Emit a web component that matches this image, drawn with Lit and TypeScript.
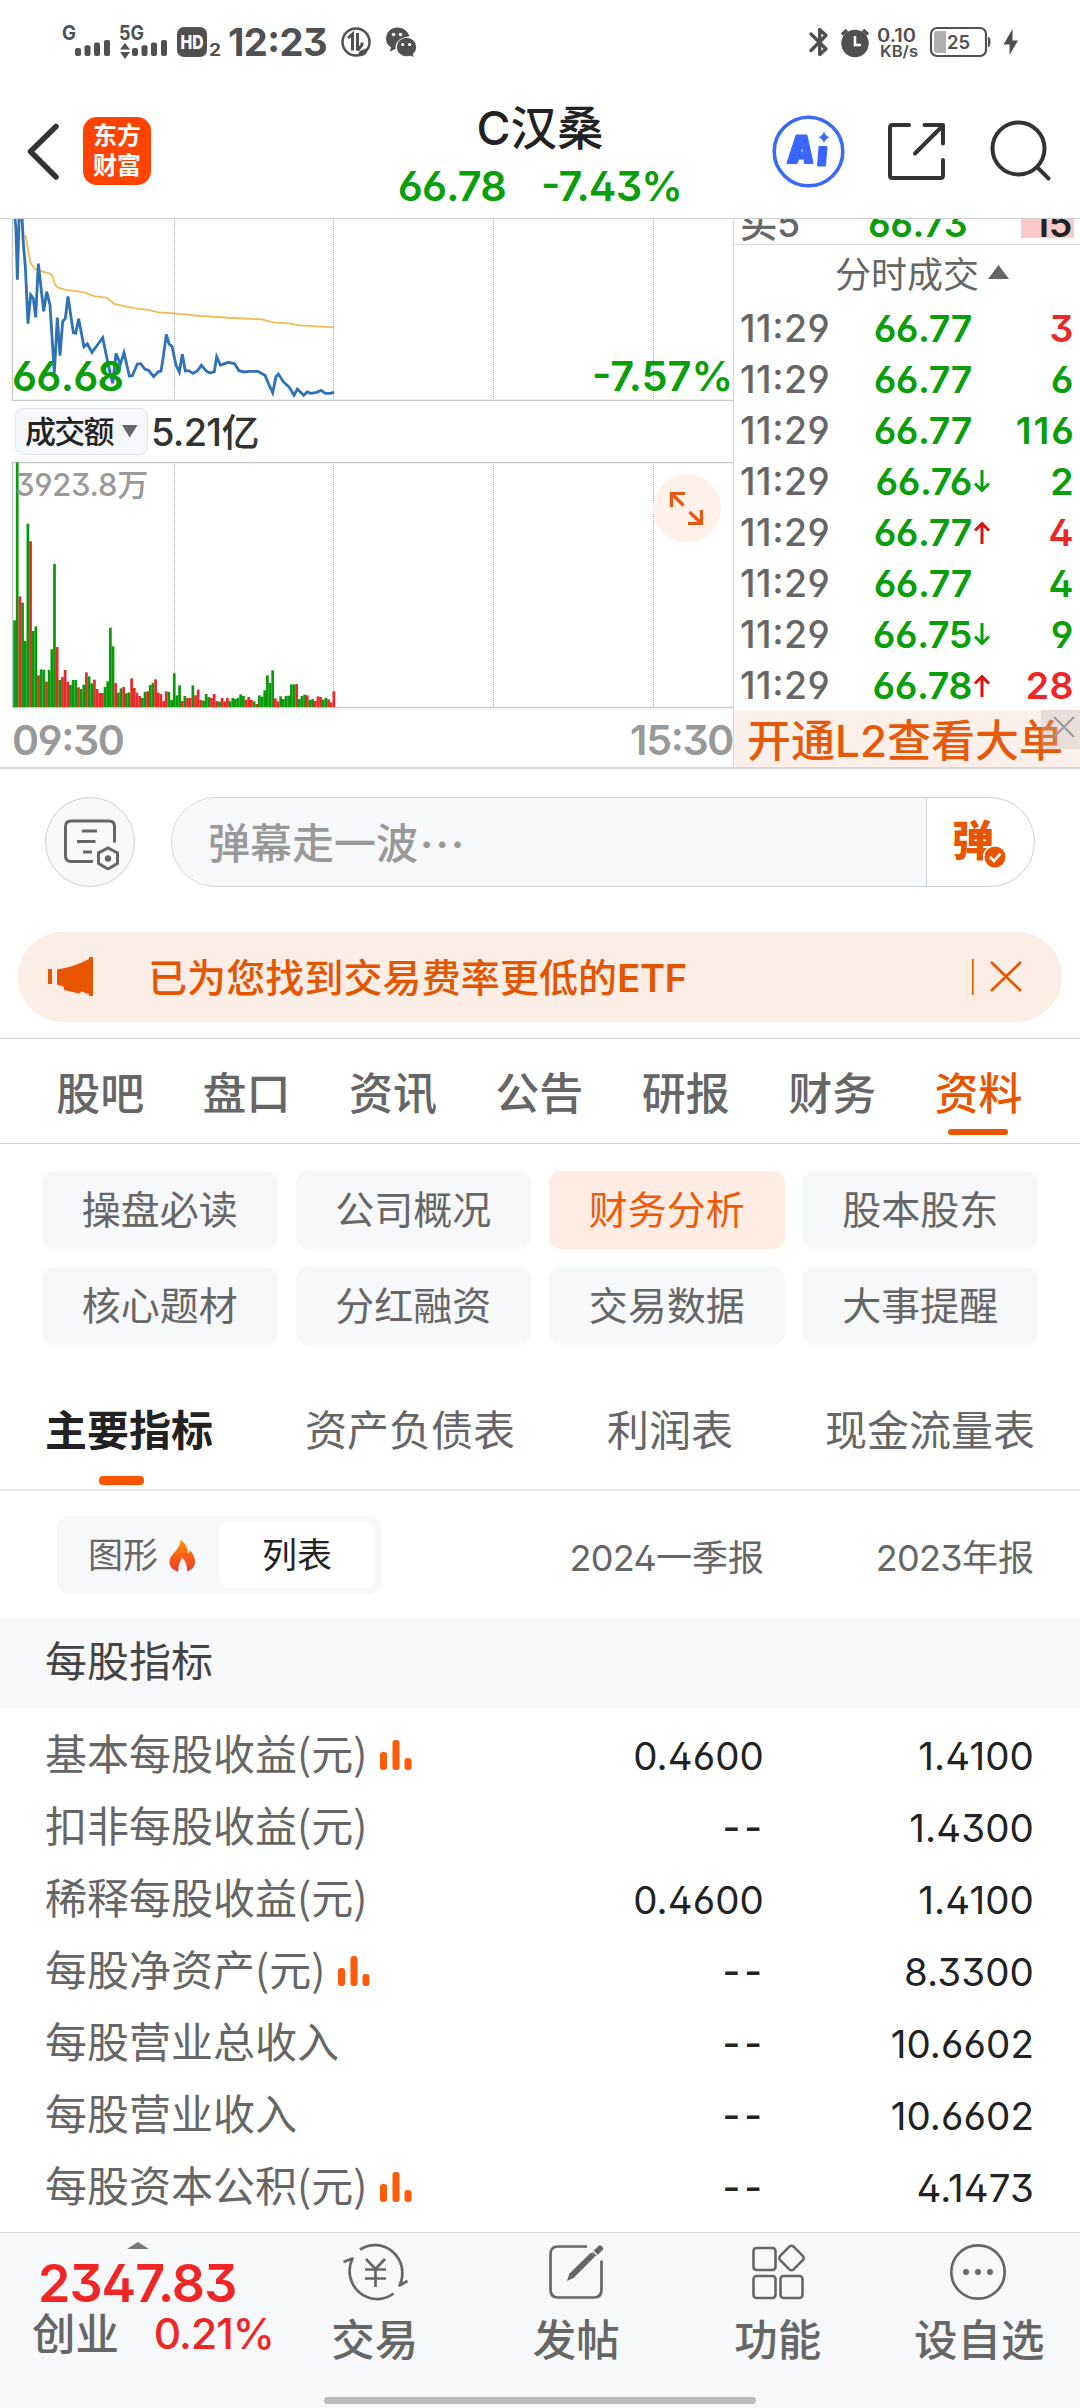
import { LitElement, html, svg, css, nothing } from "lit";
import { customElement, property } from "lit/decorators.js";
import { classMap } from "lit/directives/class-map.js";

type Trade = { price: string; qty: string; up: boolean; arrow?: "up" | "down" };
type Metric = { label: string; chart?: boolean; q1: string; year: string };

const TRADES: Trade[] = [
  { price: "66.77", qty: "3", up: true },
  { price: "66.77", qty: "6", up: false },
  { price: "66.77", qty: "116", up: false },
  { price: "66.76", qty: "2", up: false, arrow: "down" },
  { price: "66.77", qty: "4", up: true, arrow: "up" },
  { price: "66.77", qty: "4", up: false },
  { price: "66.75", qty: "9", up: false, arrow: "down" },
  { price: "66.78", qty: "28", up: true, arrow: "up" },
];

const METRICS: Metric[] = [
  { label: "基本每股收益(元)", chart: true, q1: "0.4600", year: "1.4100" },
  { label: "扣非每股收益(元)", q1: "--", year: "1.4300" },
  { label: "稀释每股收益(元)", q1: "0.4600", year: "1.4100" },
  { label: "每股净资产(元)", chart: true, q1: "--", year: "8.3300" },
  { label: "每股营业总收入", q1: "--", year: "10.6602" },
  { label: "每股营业收入", q1: "--", year: "10.6602" },
  { label: "每股资本公积(元)", chart: true, q1: "--", year: "4.1473" },
];

// Per-minute turnover: height in thirds of a pixel, g = falling, r = rising.
const VOLUME =
  "260g 734g 332r 313g 198g 550g 497r 228g 242g 95r 113g 111g 76r 111g 173g 429g 180r 81g 90r 111r 76r 66g 81g 81g 59r 54g 67g 104r 92g 71g 82r 54r 42r 42r 60g 77g 238g 182g 72r 43g 56g 60r 41g 44g 86r 57r 43r 33r 27g 45g 47r 66g 72g 83r 43r 39r 18r 47r 45g 21g 101g 35g 65g 18r 33g 27r 27r 65g 35r 52r 21r 19g 39g 30g 27r 39r 18r 16g 27r 17r 27r 17g 27g 24g 28g 38g 33g 22r 30r 21r 17g 9r 35g 31g 50g 95g 72g 110g 26r 17r 32g 24g 33g 34g 68g 68g 69r 24g 33g 37g 35r 21g 24g 18r 32r 30r 22g 27g 23r 14r 47r"
    .split(" ")
    .map((v) => ({ h: parseInt(v, 10) / 3, up: v.endsWith("r") }));

const PRICE_LINE =
  "44,10 48,60 52,209 58,0 66,20 70,100 76,170 84,341 92,255 100,265 107,322 115,161 131,304 140,245 150,285 163,490 172,323 180,437 188,335 196,325 204,259 220,368 227,370 236,326 252,410 262,402 276,427 290,408 308,383 326,470 338,520 348,430 361,463 372,428 388,498 397,497 412,462 422,461 435,478 445,480 461,500 475,485 483,483 490,440 499,373 507,402 516,409 528,465 538,486 547,433 556,483 566,482 579,490 592,483 604,466 620,484 630,489 643,485 650,440 661,465 668,463 685,457 704,461 717,482 733,486 750,484 773,484 795,496 806,522 818,548 828,500 835,492 850,515 868,532 882,556 892,537 911,556 922,546 932,550 950,547 963,541 976,550 990,550 1002,547";
const AVG_LINE =
  "66,77 77,79 84,120 92,160 107,178 120,183 148,190 157,197 165,223 172,232 196,239 252,247 285,259 320,263 343,282 405,295 440,299 475,307 523,310 600,318 700,324 785,328 820,337 865,340 900,346 1002,352";

const GRID_X = [174.5, 333.5, 493.5, 653.5];

const base = css`
  :host {
    display: block;
    font-family: Inter, "Noto Sans CJK SC", sans-serif;
    font-feature-settings: "ss01", "calt";
    color: #666;
  }
  * {
    box-sizing: border-box;
  }
  svg {
    display: block;
    flex: none;
  }
`;

@customElement("status-bar")
class StatusBar extends LitElement {
  static styles = [
    base,
    css`
      :host { height: 84px; }
      .bar { display: flex; height: 84px; justify-content: space-between; }
      .clock { font-weight: 700; font-size: 38.5px; fill: #505050; letter-spacing: -0.6px; }
      .tiny { font-weight: 700; fill: #505050; }
      .med { font-weight: 600; fill: #505050; }
      .hd { font-weight: 800; fill: #fff; }
    `,
  ];
  render() {
    return html`<div class="bar">
      <svg width="440" height="84" fill="#505050">
        <text class="tiny" x="62" y="39.5" font-size="20" textLength="14" lengthAdjust="spacingAndGlyphs">G</text>
        ${[75, 84.5, 94, 104].map((x, i) => svg`<rect x=${x} y=${48 - i * 2.7} width="6" height=${8 + i * 2.7} rx="2" />`)}
        <text class="tiny" x="119" y="40" font-size="20" textLength="25" lengthAdjust="spacingAndGlyphs">5G</text>
        <path d="M120 49.500L125 43L130 49.500ZM120 52L125 59L130 52Z" />
        ${[132, 141.500, 151, 161].map((x, i) => svg`<rect x=${x} y=${48 - i * 2.7} width="6" height=${8 + i * 2.7} rx="2" />`)}
        <rect x="177" y="27" width="30" height="30" rx="7" />
        <text class="hd" x="180.500" y="49" font-size="19" textLength="23" lengthAdjust="spacingAndGlyphs">HD</text>
        <text class="tiny" x="209" y="56" font-size="17" textLength="12" lengthAdjust="spacingAndGlyphs">2</text>
        <text class="clock" x="228" y="56" textLength="99" lengthAdjust="spacingAndGlyphs">12:23</text>
        <circle cx="356" cy="42" r="13.500" fill="none" stroke="#505050" stroke-width="2.500" />
        <path d="M348 38L352.500 34V50.500M357.500 33V50.500M362 42.500V45L357.500 50.500" fill="none" stroke="#505050" stroke-width="3" />
        <path d="M358 56C359 48 364 51 368 47C368 54 364 57 358 56Z" />
        <path d="M397 27.500C403.500 27.500 408.500 31.500 409.300 36.500C401.500 36.500 395.500 41.500 395.500 47.500C395.500 48 395.500 48.500 395.600 49L390 51.500L391 47.300C388 45.300 386 42.500 386 39C386 32.600 391 27.500 397 27.500Z" />
        <ellipse cx="406.500" cy="47" rx="9.700" ry="9.200" />
        <path d="M409 55L413.500 57L412.500 52Z" />
        <circle cx="393.500" cy="34.500" r="1.800" fill="#fff" /><circle cx="400.500" cy="34.500" r="1.800" fill="#fff" />
        <circle cx="402.700" cy="44.500" r="1.600" fill="#fff" /><circle cx="409.600" cy="44.500" r="1.600" fill="#fff" />
      </svg>
      <svg width="280" height="84" viewBox="800 0 280 84" fill="#505050">
        <path d="M811 34L826 49L819.700 54.500V29.500L826 35.500L811 50.500" fill="none" stroke="#505050" stroke-width="3.400" stroke-linejoin="round" stroke-linecap="round" />
        <circle cx="855" cy="43.500" r="13.700" />
        <path d="M842 34.500L847 30M868 34.500L863 30" stroke="#505050" stroke-width="3.500" />
        <path d="M855 36V45H861" fill="none" stroke="#fff" stroke-width="2.500" />
        <text class="med" x="877" y="41.500" font-size="18" textLength="39" lengthAdjust="spacingAndGlyphs">0.10</text>
        <text class="med" x="880" y="57" font-size="15.500" textLength="38" lengthAdjust="spacingAndGlyphs">KB/s</text>
        <rect x="931" y="28" width="55" height="28" rx="6" fill="none" stroke="#505050" stroke-width="2.200" />
        <path d="M937 31H946V53H937Q934 53 934 50V34Q934 31 937 31Z" fill="#b0b0b0" />
        <path d="M988 37Q990.500 37 990.500 42T988 47Z" />
        <text class="med" x="947" y="49" font-size="19" textLength="23" lengthAdjust="spacingAndGlyphs">25</text>
        <path d="M1012.500 29L1003.500 44.500H1009.500V55L1018 40.500H1012.500Z" />
      </svg>
    </div>`;
  }
}

@customElement("stock-header")
class StockHeader extends LitElement {
  static styles = [
    base,
    css`
      .head { height: 134px; display: grid; grid-template-columns: 1fr auto 1fr; }
      .left { display: flex; padding: 33px 0 0 26px; gap: 23px; }
      .logo { width: 68px; height: 68px; border-radius: 14px; background: #ff4400; color: #fff; font-weight: 700; font-size: 24px; line-height: 30px; text-align: center; padding-top: 4px; }
      .mid { display: flex; flex-direction: column; align-items: center; }
      .name { font-size: 46.500px; line-height: 60px; margin-top: 14px; color: #222; font-weight: 500; }
      .quote { display: flex; gap: 35px; font-size: 41.500px; font-weight: 600; line-height: 50px; margin-top: 3px; color: #0a9e0a; letter-spacing: -0.800px; white-space: nowrap; }
      .right { display: flex; justify-content: flex-end; padding-top: 31px; }
    `,
  ];
  render() {
    return html`<div class="head">
      <div class="left">
        <svg width="34" height="68" viewBox="26 117 34 68"><path d="M56 126.500L30.500 151.500L56 177" fill="none" stroke="#333" stroke-width="5.500" stroke-linecap="round" stroke-linejoin="round" /></svg>
        <div class="logo">东方<br />财富</div>
      </div>
      <div class="mid">
        <div class="name">C汉桑</div>
        <div class="quote"><span>66.78</span><span>-7.43%</span></div>
      </div>
      <div class="right">
        <svg width="310" height="74" viewBox="770 115 310 74" fill="none">
          <circle cx="808.500" cy="151.500" r="34.300" stroke="#3d6af2" stroke-width="3.600" />
          <g stroke="#3a66ff" stroke-linejoin="round" fill="#3a66ff">
            <path fill-rule="evenodd" stroke-width="2" d="M796.500 135.500H806.500L812.500 163H805L804.300 158.500H798.500L796.500 163H787.500ZM799.500 152.500H803.800L803 144Z" />
            <path stroke-width="2" d="M819.500 147H826.500L825 165.500H818Z" />
            <path stroke="none" d="M824 131.500Q825.500 136 829.500 137.300Q825.500 138.500 824 143Q822.500 138.500 818.500 137.300Q822.500 136 824 131.500Z" />
          </g>
          <g stroke="#333" stroke-width="4" stroke-linecap="round" stroke-linejoin="round">
            <path d="M909 125H892.500Q890 125 890 127.500V175.500Q890 178 892.500 178H940.500Q943 178 943 175.500V160M924.500 125H943V143.500M942 126.500L915 153.500" />
            <circle cx="1018.500" cy="148.500" r="26" />
            <path d="M1038 168L1048.500 178.500" />
          </g>
        </svg>
      </div>
    </div>`;
  }
}

@customElement("trend-chart")
class TrendChart extends LitElement {
  static styles = [
    base,
    css`
      :host { width: 733px; }
      .pane { position: relative; }
      .over { position: absolute; line-height: 50px; white-space: nowrap; font-weight: 600; }
      .low { left: 12px; top: 133px; font-size: 41.500px; color: #0a9e0a; letter-spacing: -0.700px; }
      .pct { right: 0; top: 133px; font-size: 41.500px; color: #0a9e0a; letter-spacing: -0.100px; }
      .max { left: 15px; top: -2px; font-size: 31px; font-weight: 500; color: #999; letter-spacing: -0.300px; }
      .kind { display: flex; align-items: center; height: 61px; padding-left: 15px; gap: 3px; font-weight: 500; color: #333; }
      .pick { display: flex; align-items: center; width: 133px; height: 47px; border-radius: 8px; background: #f6f7fa; border: 1.500px solid #e2e5ea; padding-left: 9px; gap: 9px; font-size: 31px; line-height: 44px; color: #222; letter-spacing: -1.700px; }
      .sum { font-size: 38px; line-height: 46px; letter-spacing: -0.700px; }
      .times { display: flex; justify-content: space-between; padding: 6px 0 0 12px; height: 58px; font-size: 41px; line-height: 50px; font-weight: 600; color: #999; letter-spacing: -1.300px; }
      .expand { position: absolute; left: 652px; top: 11px; }
    `,
  ];
  render() {
    const grid = (h: number) => GRID_X.map((x) => svg`<path d=${`M${x} 2V${h}`} stroke="#aaa" stroke-width="1" stroke-dasharray="1 1" />`);
    return html`
      <div class="pane">
        <svg width="733" height="183" viewBox="0 218 733 183">
          <g transform="translate(0 218)">${grid(182)}</g>
          <path d="M12.500 218V400.500H733" fill="none" stroke="#c6c8ca" stroke-width="1.400" />
          <g transform="translate(0 210) scale(.33333)" fill="none" stroke-linejoin="round">
            <polyline points=${AVG_LINE} stroke="#f0bd55" stroke-width="5.500" />
            <polyline points=${PRICE_LINE} stroke="#2f72b8" stroke-width="8.500" stroke-linejoin="miter" />
          </g>
          <path d="M0 218.500H733" stroke="#cfd2d5" stroke-width="1.200" />
        </svg>
        <span class="over low">66.68</span><span class="over pct">-7.57%</span>
      </div>
      <div class="kind">
        <span class="pick">成交额<svg width="16" height="13"><path d="M0 0H15.500L7.700 12.500Z" fill="#666" /></svg></span>
        <span class="sum">5.21亿</span>
      </div>
      <div class="pane">
        <svg width="733" height="247" viewBox="0 463 733 247">
          <g transform="translate(0 463)">${grid(245)}</g>
          <path d="M733 463.500H12.500V708.500H733" fill="none" stroke="#c6c8ca" stroke-width="1.400" />
          ${VOLUME.map((b, i) => svg`<rect x=${13.2 + i * 2.661} y=${708 - b.h} width="2.750" height=${b.h} fill=${b.up ? "#e82a2a" : "#0a9b0a"} />`)}
        </svg>
        <span class="over max">3923.8万</span>
        <svg class="expand" width="70" height="70" viewBox="652 474 70 70">
          <circle cx="687" cy="509.500" r="34" fill="#fff0e9" />
          <path d="M671.500 508V494.500H685M672.500 495.500L683.500 506.500M701.500 511V524.500H688M700.500 523.500L689.500 513" fill="none" stroke="#e25a10" stroke-width="3.200" />
        </svg>
      </div>
      <div class="times"><span>09:30</span><span>15:30</span></div>
    `;
  }
}

@customElement("trade-list")
class TradeList extends LitElement {
  static styles = [
    base,
    css`
      :host { border-left: 1.500px solid #d4d7da; font-weight: 600; font-size: 37.500px; width: 347px; }
      .row { display: grid; grid-template-columns: 135px 97px 1fr; height: 51px; line-height: 53px; padding: 0 6px 0 6px; letter-spacing: -0.400px; white-space: nowrap; }
      .time { letter-spacing: 0.500px; font-weight: 500; }
      .price { display: flex; justify-content: flex-end; color: #0a9e0a; position: relative; }
      .qty { text-align: right; letter-spacing: 0.500px; }
      .qty.long { letter-spacing: 2px; margin-right: -2px; }
      .rise { color: #ee2626; }
      .fall { color: #0a9e0a; }
      .arrow { position: absolute; left: 98px; top: 15px; }
      .book { height: 27px; overflow: hidden; border-top: 1px solid #cfd2d5; border-bottom: 1.500px solid #d8dadc; display: grid; grid-template-columns: 128px 1fr 53px; padding: 0 6px; letter-spacing: -0.400px; }
      .book > span { margin-top: -19px; line-height: 48px; height: 48px; }
      .book .side { font-weight: 500; }
      .book .lot { margin-top: 0; height: 19px; background: #fcc9c9; color: #222; text-align: right; line-height: 10px; padding-right: 2px; }
      .title { display: flex; align-items: center; gap: 9px; height: 57px; padding: 0 0 3px 101px; font-size: 36px; font-weight: 400; }
      .l2 { position: relative; height: 57px; line-height: 63px; background: #fdf0ea; color: #e45a0a; font-size: 44px; font-weight: 500; padding-left: 13px; white-space: nowrap; }
      .close { position: absolute; right: 0; top: 0; }
    `,
  ];
  render() {
    return html`
      <div class="book"><span class="side">买5</span><span class="fall">66.73</span><span class="lot">15</span></div>
      <div class="title">分时成交<svg width="21" height="14"><path d="M10.500 0L21 14H0Z" fill="#666" /></svg></div>
      ${TRADES.map(
        (t) => html`<div class="row">
          <span class="time">11:29</span>
          <span class="price">${t.price}${t.arrow
              ? html`<svg class="arrow" width="18" height="24" fill="none" stroke-width="3" stroke=${t.arrow === "up" ? "#dd1010" : "#0a9e0a"}>
                  <path d=${t.arrow === "up" ? "M9 23V3M2 9.500L9 2.500L16 9.500" : "M9 0V20M2 13.500L9 20.500L16 13.500"} />
                </svg>`
              : nothing}</span>
          <span class=${classMap({ qty: true, long: t.qty.length > 2, rise: t.up, fall: !t.up })}>${t.qty}</span>
        </div>`
      )}
      <div class="l2">开通L2查看大单
        <svg class="close" width="39" height="39"><rect width="39" height="39" fill="#bbb" opacity=".3" /><path d="M13 7L33 27M33 7L13 27" stroke="#999" stroke-width="2" /></svg>
      </div>
    `;
  }
}

@customElement("metric-row")
class MetricRow extends LitElement {
  @property({ attribute: false }) metric!: Metric;
  static styles = [
    base,
    css`
      .row { display: grid; grid-template-columns: 450px 269px 270px; height: 72px; padding: 0 46px 0 45px; font-size: 42px; line-height: 66px; white-space: nowrap; }
      .label { display: flex; gap: 13px; font-family: "Noto Sans CJK SC", sans-serif; }
      .label svg { margin-top: 20px; }
      .num { text-align: right; color: #222; font-size: 38.500px; letter-spacing: 0.100px; line-height: 74px; }
      .none { letter-spacing: 4px; font-weight: 500; line-height: 72px; margin-right: -2px; }
    `,
  ];
  render() {
    const m = this.metric;
    const num = (v: string) => html`<span class=${classMap({ num: true, none: v === "--" })}>${v}</span>`;
    return html`<div class="row">
      <span class="label">${m.label}${m.chart
          ? html`<svg width="32" height="32" fill="#ff5a0a"><rect x="0" y="13" width="7" height="18" rx="3" /><rect x="12.500" y="1" width="7" height="30" rx="3" /><rect x="24.500" y="19" width="7" height="12" rx="3" /></svg>`
          : nothing}</span>
      ${num(m.q1)}${num(m.year)}
    </div>`;
  }
}

@customElement("bottom-bar")
class BottomBar extends LitElement {
  static styles = [
    base,
    css`
      .bar { height: 176px; background: #f7f8fa; border-top: 1.500px solid #d0d3d6; display: grid; grid-template-columns: 274px repeat(4, 201.500px); font-weight: 500; position: relative; }
      .index { color: #ee2626; padding: 9px 0 0 33px; font-weight: 600; }
      .caret { margin-left: 94px; }
      .value { font-size: 52px; line-height: 52px; margin-top: 9px; padding-left: 5px; letter-spacing: -1px; }
      .change { display: flex; justify-content: space-between; font-size: 42.500px; line-height: 44px; margin-top: 2px; letter-spacing: -1px; white-space: nowrap; }
      .pct { font-weight: 500; }
      .name { color: #666; font-size: 43.500px; letter-spacing: 0; font-weight: 500; margin-left: -1px; }
      .item { display: flex; flex-direction: column; align-items: center; padding-top: 8px; font-size: 43.500px; line-height: 60px; gap: 7px; white-space: nowrap; }
      .home { position: absolute; left: 324px; top: 164px; width: 432px; height: 7px; border-radius: 4px; background: #b9bbbd; }
    `,
  ];
  render() {
    return html`<div class="bar">
      <div class="index">
        <svg class="caret" width="22" height="7"><path d="M11 0L22 7H0Z" fill="#777" /></svg>
        <div class="value">2347.83</div>
        <div class="change"><span class="name">创业</span><span class="pct">0.21%</span></div>
      </div>
      <div class="item">
        <svg width="68" height="62" viewBox="341 2241 68 62" fill="none" stroke="#666" stroke-width="2.700">
          <path d="M360 2249.500A27.500 28 0 0 1 399.500 2285.500L407.500 2281" stroke-linejoin="round" />
          <path d="M393.500 2293.500A27.500 28 0 0 1 352.500 2258.500L343.500 2262" stroke-linejoin="round" />
          <path d="M366 2259L375.500 2269L385 2259M365 2269.500H386M365 2278.500H386M375.500 2269V2287" />
        </svg>
        <span>交易</span>
      </div>
      <div class="item">
        <svg width="60" height="62" viewBox="547 2241 60 62" fill="none" stroke="#666" stroke-width="2.700">
          <path d="M588 2246.500H559Q551.500 2246.500 551.500 2254V2289.500Q551.500 2297.500 559 2297.500H595Q602.500 2297.500 602.500 2289.500V2260.500" />
          <path d="M568 2281L570.500 2273.500L592 2252.500L596 2256.500L574.500 2278Z" fill="#666" stroke="none" />
          <path d="M596.500 2253L601 2248.500" stroke-width="6" stroke-linecap="round" />
          <path d="M592.500 2249.500L599.500 2256.500" stroke="#f7f8fa" stroke-width="1.500" />
        </svg>
        <span>发帖</span>
      </div>
      <div class="item">
        <svg width="60" height="62" viewBox="748 2241 60 62" fill="none" stroke="#666" stroke-width="2.600">
          <rect x="753.500" y="2248" width="22" height="22" rx="3" /><rect x="753.500" y="2276" width="22" height="22" rx="3" />
          <rect x="780.500" y="2276" width="22" height="22" rx="3" /><rect x="782" y="2248.500" width="19" height="19" rx="3" transform="rotate(45 791.500 2258)" />
        </svg>
        <span>功能</span>
      </div>
      <div class="item">
        <svg width="62" height="62" viewBox="949 2241 62 62"><circle cx="979" cy="2272" r="26.700" fill="none" stroke="#666" stroke-width="2.700" /><circle cx="967" cy="2272" r="3" fill="#666" /><circle cx="979" cy="2272" r="3" fill="#666" /><circle cx="991" cy="2272" r="3" fill="#666" /></svg>
        <span>设自选</span>
      </div>
      <div class="home"></div>
    </div>`;
  }
}

@customElement("app-root")
class AppRoot extends LitElement {
  static styles = [
    base,
    css`
      :host { width: 1080px; height: 2408px; background: #fff; overflow: hidden; }
      .page { display: flex; flex-direction: column; height: 2408px; font-family: "Noto Sans CJK SC", sans-serif; }
      .market { display: flex; height: 551px; border-bottom: 2px solid #d4d7da; }
      .danmu { display: flex; gap: 36px; padding: 28px 45px 0; height: 163px; }
      .round { width: 90px; height: 90px; border-radius: 50%; background: #f7f8fa; border: 1.500px solid #cdd2d7; padding: 18px 0 0 16px; }
      .field { flex: 1; display: flex; height: 90px; border-radius: 45px; border: 1.500px solid #cdd2d7; overflow: hidden; }
      .hint { flex: 1; background: #f7f8fa; padding-left: 36px; font-size: 42px; font-weight: 500; line-height: 86px; color: #999; border-right: 1.500px solid #cdd2d7; }
      .dots { font-family: Inter, sans-serif; letter-spacing: 2px; font-weight: 600; padding-left: 2px; }
      .send { position: relative; width: 107px; padding-left: 25px; font-size: 42px; font-weight: 900; line-height: 80px; color: #e85500; }
      .tick { position: absolute; left: 56px; top: 47px; }
      .promo { display: flex; align-items: center; height: 90px; margin: 0 18px; border-radius: 45px; background: #fdeee5; color: #e45500; padding: 0 38px 0 28px; font-size: 39px; font-weight: 500; }
      .promo .msg { flex: 1; padding: 0 0 4px 54px; letter-spacing: 0.100px; }
      .etf { font-family: Inter, sans-serif; font-weight: 600; font-size: 38px; letter-spacing: -0.300px; }
      .tabs { display: grid; grid-template-columns: repeat(7, 146.400px); padding: 0 27px; margin-top: 16px; border-top: 1.500px solid #cfd3d6; border-bottom: 1.500px solid #cfd3d6; height: 106px; font-size: 44px; font-weight: 500; line-height: 104px; text-align: center; }
      .tab { position: relative; }
      .tab.on { color: #e85500; }
      .tab.on::after { content: ""; position: absolute; left: 43px; bottom: 8px; width: 60px; height: 6px; border-radius: 3px; background: #e85500; }
      .chips { display: grid; grid-template-columns: repeat(4, 1fr); gap: 18px; padding: 27px 42px 0; }
      .chip { height: 78px; border-radius: 12px; background: #f7f8fa; text-align: center; font-size: 39px; line-height: 73px; }
      .chip.on { background: #ffede4; color: #ee5a0a; }
      .subs { display: flex; justify-content: space-between; margin-top: 47px; padding: 0 45px; height: 99px; border-bottom: 2px solid #e6e6e8; font-size: 42px; line-height: 72px; }
      .sub { position: relative; }
      .sub.on { color: #222; font-weight: 700; }
      .sub.on::after { content: ""; position: absolute; left: 54px; bottom: 4px; width: 45px; height: 9px; border-radius: 4px; background: #ff5500; }
      .cols { display: grid; grid-template-columns: 450px 269px 270px; padding: 25px 46px 0 45px; height: 127px; font-size: 36px; text-align: right; line-height: 79px; }
      .toggle { display: grid; grid-template-columns: 156px 156px; width: 324px; height: 78px; margin-left: 12px; border-radius: 12px; background: #f7f8fa; padding: 6px; font-size: 35px; line-height: 62px; text-align: center; }
      .opt { display: flex; gap: 11px; padding-left: 25px; }
      .opt svg { margin-top: 18px; }
      .opt.on { display: block; padding: 0; background: #fff; border-radius: 9px; color: #222; }
      .section { height: 90px; margin-bottom: 11px; background: #f7f8fa; padding-left: 45px; font-size: 42px; line-height: 82px; color: #444; }
      .list { height: 513px; }
      .digits { font-family: Inter, sans-serif; letter-spacing: -0.700px; }
    `,
  ];
  render() {
    const tabs = ["股吧", "盘口", "资讯", "公告", "研报", "财务", "资料"];
    const chips = ["操盘必读", "公司概况", "财务分析", "股本股东", "核心题材", "分红融资", "交易数据", "大事提醒"];
    const subs = ["主要指标", "资产负债表", "利润表", "现金流量表"];
    return html`<div class="page">
      <status-bar></status-bar>
      <stock-header></stock-header>
      <div class="market"><trend-chart></trend-chart><trade-list></trade-list></div>
      <div class="danmu">
        <div class="round">
          <svg width="60" height="54" viewBox="62 815 60 54" fill="none" stroke="#666" stroke-width="3">
            <path d="M93 860.500H71Q65.500 860.500 65.500 855V825.500Q65.500 820 71 820H109Q114.500 820 114.500 825.500V841.500M82 830H97M77 840.500H95.500M83 851H92" />
            <path d="M108 847L117.500 852V862.500L108 868L98.500 862.500V852Z" /><circle cx="108" cy="857.500" r="3.200" fill="#666" stroke="none" />
          </svg>
        </div>
        <div class="field">
          <div class="hint">弹幕走一波<span class="dots">···</span></div>
          <div class="send">弹
            <svg class="tick" width="24" height="24"><circle cx="12" cy="12" r="12" fill="#fff" /><circle cx="12" cy="12" r="10.500" fill="#e85500" /><path d="M7 12L11 16L17.500 8.500" fill="none" stroke="#fff" stroke-width="2.600" /></svg>
          </div>
        </div>
      </div>
      <div class="promo">
        <svg width="48" height="42" viewBox="46 956 48 42" fill="#e85500"><path d="M48 969H52V984H48ZM57 969.500Q74 967 89 959V957H93V996H89V994Q86 993.500 82 991.500L79 993.500L64 990L63.500 986.500L57 984.500Z" /></svg>
        <span class="msg">已为您找到交易费率更低的<span class="etf">ETF</span></span>
        <svg width="52" height="38" viewBox="974 958 52 38" fill="none" stroke="#e45500"><path d="M974.800 959V995" stroke-width="1.600" /><path d="M993 962L1023 991M1023 962L993 991" stroke-width="2.600" /></svg>
      </div>
      <div class="tabs">${tabs.map((t) => html`<span class=${classMap({ tab: true, on: t === "资料" })}>${t}</span>`)}</div>
      <div class="chips">${chips.map((t) => html`<span class=${classMap({ chip: true, on: t === "财务分析" })}>${t}</span>`)}</div>
      <div class="subs">${subs.map((t, i) => html`<span class=${classMap({ sub: true, on: i === 0 })}>${t}</span>`)}</div>
      <div class="cols">
        <div class="toggle">
          <span class="opt">图形<svg width="27" height="32" viewBox="0 0 27 32">
              <defs><linearGradient id="fire" x1="0" y1="0" x2="0" y2="1"><stop offset="0" stop-color="#ff9a10" /><stop offset=".45" stop-color="#fb6412" /><stop offset="1" stop-color="#ea3a30" /></linearGradient></defs>
              <path d="M11.500 0C18 4 18.500 9 19 13.500C20 12.500 20.500 11 20.500 10C24 13 26 17.500 26 21.500C26 26.500 23 30 18 31.500C18.500 25 16.500 21 13 17.500C12 21 8.500 25 9.500 31.500C4 30.500 .5 27 .5 21.500C.5 14 11.500 10 11.500 0Z" fill="url(#fire)" /></svg></span>
          <span class="opt on">列表</span>
        </div>
        <span><span class="digits">2024</span>一季报</span><span><span class="digits">2023</span>年报</span>
      </div>
      <div class="section">每股指标</div>
      <div class="list">${METRICS.map((m) => html`<metric-row .metric=${m}></metric-row>`)}</div>
      <bottom-bar></bottom-bar>
    </div>`;
  }
}
